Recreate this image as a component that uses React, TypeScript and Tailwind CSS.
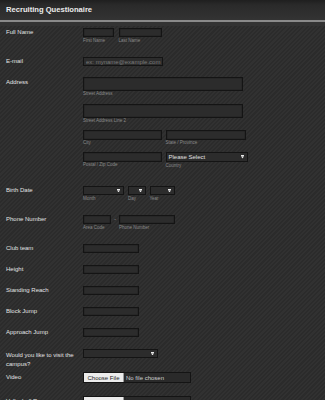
import React from "react";

const Arrow = () => (
  <svg width="3" height="3.5" viewBox="0 0 3 3.5" className="shrink-0">
    <rect x="0" y="0" width="3" height="1" fill="#e8e8e8" />
    <path d="M0 1.3 L3 1.3 L1.5 3.5 Z" fill="#e8e8e8" />
  </svg>
);

const Box = ({ w, h = "h-[9px]" }: { w: string; h?: string }) => (
  <div className={`${w} ${h} border border-[#141414] bg-[#2c2c2c] shadow-[inset_0_0_1px_#000]`} />
);

const Sel = ({ w, h = "h-[9px]", text }: { w: string; h?: string; text?: string }) => (
  <div
    className={`${w} ${h} border border-[#141414] bg-[#2c2c2c] flex items-center justify-between pl-[2px] pr-[3px]`}
  >
    <span className="text-[6px] leading-none text-[#e0e0e0]">{text ?? ""}</span>
    <Arrow />
  </div>
);

const Sub = ({ children }: { children: React.ReactNode }) => (
  <div className="text-[4.5px] leading-[5px] text-[#8a8a8a] whitespace-nowrap mt-[0.5px]">{children}</div>
);

const Label = ({ children, cls = "" }: { children: React.ReactNode; cls?: string }) => (
  <div className={`w-[83px] shrink-0 pl-[6px] pr-[4px] text-[6px] leading-[9px] text-[#e2e2e2] ${cls}`}>{children}</div>
);

const File = () => (
  <div className="w-[108px] h-[11px] border border-[#141414] bg-[#2a2a2a] flex items-center">
    <div className="w-[40px] h-full bg-[#ececec] border-r border-[#9a9a9a] flex items-center justify-center text-[6px] leading-none text-[#222]">
      Choose File
    </div>
    <span className="ml-[2px] text-[6px] leading-none text-[#d0d0d0]">No file chosen</span>
  </div>
);

export default function App() {
  return (
    <div className="w-full min-h-[400px] overflow-hidden font-['Liberation_Sans',Arial,sans-serif] bg-[#2f2f2f] bg-[repeating-linear-gradient(135deg,#313131_0px,#313131_1.5px,#2b2b2b_1.5px,#2b2b2b_3px)]">
      <div className="h-[20px] flex items-center px-[6px] bg-[linear-gradient(#1f1f1f_0px,#2a2a2a_5px,#333333_20px)]">
        <span className="text-[7.6px] font-bold text-[#ececec]">Recruiting Questionaire</span>
      </div>
      <div className="h-[2px] bg-[#8a8a8a]" />
      <div className="h-[4px] bg-[#333]" />

      <div className="flex flex-col pt-[2px]">
        {/* Full Name */}
        <div className="flex h-[29px]">
          <Label>Full Name</Label>
          <div className="flex gap-[4.5px]">
            <div>
              <Box w="w-[31px]" />
              <Sub>First Name</Sub>
            </div>
            <div>
              <Box w="w-[43px]" />
              <Sub>Last Name</Sub>
            </div>
          </div>
        </div>

        {/* Email */}
        <div className="flex h-[20px]">
          <Label>E-mail</Label>
          <div className="w-[80px] h-[9px] border border-[#141414] bg-[#2c2c2c] flex items-center pl-[2px]">
            <span className="text-[6px] leading-none text-[#7a7a7a] whitespace-nowrap">ex: myname@example.com</span>
          </div>
        </div>

        {/* Address */}
        <div className="flex h-[109px]">
          <Label cls="pt-[1px]">Address</Label>
          <div className="flex flex-col">
            <Box w="w-[160px]" h="h-[13.5px]" />
            <Sub>Street Address</Sub>
            <div className="mt-[8px]">
              <Box w="w-[160px]" h="h-[13.5px]" />
              <Sub>Street Address Line 2</Sub>
            </div>
            <div className="mt-[7px] flex gap-[3.5px]">
              <div>
                <Box w="w-[79px]" h="h-[9.5px]" />
                <Sub>City</Sub>
              </div>
              <div>
                <Box w="w-[80px]" h="h-[9.5px]" />
                <Sub>State / Province</Sub>
              </div>
            </div>
            <div className="mt-[7px] flex gap-[3.5px]">
              <div>
                <Box w="w-[79px]" h="h-[9.5px]" />
                <Sub>Postal / Zip Code</Sub>
              </div>
              <div>
                <Sel w="w-[82px]" h="h-[10px]" text="Please Select" />
                <Sub>Country</Sub>
              </div>
            </div>
          </div>
        </div>

        {/* Birth Date */}
        <div className="flex h-[29px]">
          <Label>Birth Date</Label>
          <div className="flex">
            <div>
              <Sel w="w-[41px]" />
              <Sub>Month</Sub>
            </div>
            <div className="ml-[4px]">
              <Sel w="w-[18px]" />
              <Sub>Day</Sub>
            </div>
            <div className="ml-[3.5px]">
              <Sel w="w-[25px]" />
              <Sub>Year</Sub>
            </div>
          </div>
        </div>

        {/* Phone */}
        <div className="flex h-[29px]">
          <Label>Phone Number</Label>
          <div className="flex">
            <div>
              <Box w="w-[28px]" />
              <Sub>Area Code</Sub>
            </div>
            <div className="w-[8px] h-[9px] flex items-center justify-center text-[5px] text-[#aaa]">-</div>
            <div>
              <Box w="w-[56px]" />
              <Sub>Phone Number</Sub>
            </div>
          </div>
        </div>

        {/* Singles */}
        {["Club team", "Height", "Standing Reach", "Block Jump", "Approach Jump"].map((l) => (
          <div key={l} className="flex h-[21px]">
            <Label>{l}</Label>
            <Box w="w-[56px]" />
          </div>
        ))}

        {/* Visit */}
        <div className="flex h-[23px]">
          <Label cls="leading-[6.7px] pt-[1.6px]">Would you like to visit the campus?</Label>
          <Sel w="w-[75px]" />
        </div>

        {/* Video */}
        <div className="flex h-[24px]">
          <Label cls="pt-[1px]">Video</Label>
          <File />
        </div>

        {/* Resume */}
        <div className="flex h-[24px]">
          <Label cls="pt-[1px]">Volleyball Resume</Label>
          <File />
        </div>
      </div>
    </div>
  );
}
